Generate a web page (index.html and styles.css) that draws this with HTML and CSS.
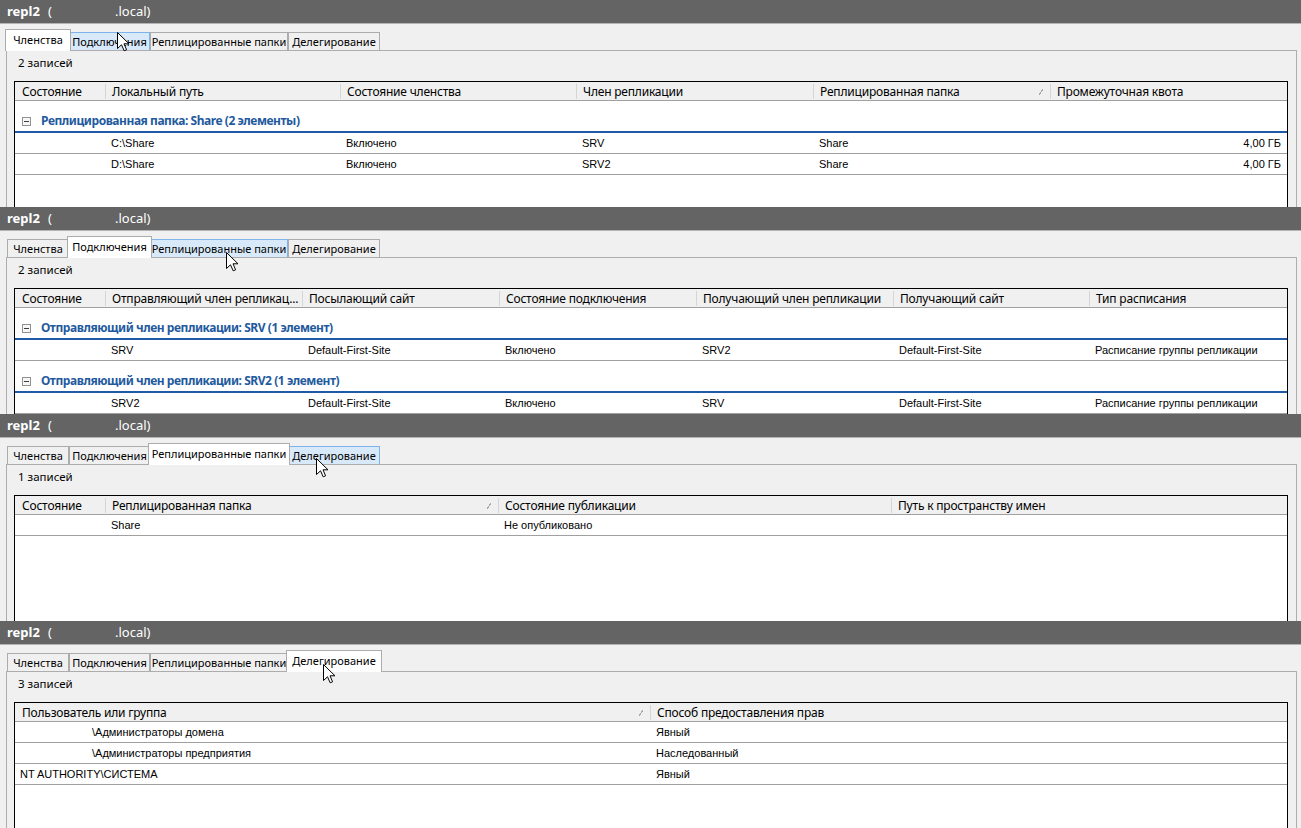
FILE: index.html
```html
<!DOCTYPE html>
<html lang="ru">
<head>
<meta charset="utf-8">
<title>repl2</title>
<link rel="stylesheet" href="styles.css">
</head>
<body>

<!-- Panel 1: Членства -->
<section class="panel">
  <div class="titlebar"><b class="tb-name">repl2</b><span class="tb-open">(</span><span>.local)</span></div>
  <div class="pbody">
    <div class="tabs">
      <div class="tab t1 sel">Членства</div>
      <div class="tab t2 hover">Подключения</div>
      <div class="tab t3">Реплицированные папки</div>
      <div class="tab t4">Делегирование</div>
    </div>
    <div class="tabpage">
      <div class="count">2 записей</div>
      <div class="list cols-a">
        <div class="lrow head">
          <div class="hc first">Состояние</div>
          <div class="hc">Локальный путь</div>
          <div class="hc">Состояние членства</div>
          <div class="hc">Член репликации</div>
          <div class="hc sorted">Реплицированная папка<span class="sort"></span></div>
          <div class="hc last">Промежуточная квота</div>
        </div>
        <div class="group"><span class="minus"></span>Реплицированная папка: Share (2 элементы)</div>
        <div class="lrow item">
          <div class="c"></div><div class="c">C:\Share</div><div class="c">Включено</div><div class="c">SRV</div><div class="c">Share</div><div class="c num">4,00 ГБ</div>
        </div>
        <div class="lrow item">
          <div class="c"></div><div class="c">D:\Share</div><div class="c">Включено</div><div class="c">SRV2</div><div class="c">Share</div><div class="c num">4,00 ГБ</div>
        </div>
      </div>
    </div>
  </div>
  <svg class="cursor cur1" width="13" height="20" viewBox="0 0 13 20"><path d="M0.5 0.5 L0.5 16.5 L4.5 12.8 L7.2 18.8 L9.6 17.8 L7 11.8 L12 11.8 Z" fill="#fff" stroke="#000" stroke-width="1"/></svg>
</section>

<!-- Panel 2: Подключения -->
<section class="panel">
  <div class="titlebar"><b class="tb-name">repl2</b><span class="tb-open">(</span><span>.local)</span></div>
  <div class="pbody">
    <div class="tabs">
      <div class="tab t1">Членства</div>
      <div class="tab t2 sel">Подключения</div>
      <div class="tab t3 hover">Реплицированные папки</div>
      <div class="tab t4">Делегирование</div>
    </div>
    <div class="tabpage">
      <div class="count">2 записей</div>
      <div class="list cols-b">
        <div class="lrow head">
          <div class="hc first">Состояние</div>
          <div class="hc">Отправляющий член репликац...</div>
          <div class="hc">Посылающий сайт</div>
          <div class="hc">Состояние подключения</div>
          <div class="hc">Получающий член репликации</div>
          <div class="hc">Получающий сайт</div>
          <div class="hc last">Тип расписания</div>
        </div>
        <div class="group"><span class="minus"></span>Отправляющий член репликации: SRV (1 элемент)</div>
        <div class="lrow item">
          <div class="c"></div><div class="c">SRV</div><div class="c">Default-First-Site</div><div class="c">Включено</div><div class="c">SRV2</div><div class="c">Default-First-Site</div><div class="c">Расписание группы репликации</div>
        </div>
        <div class="group"><span class="minus"></span>Отправляющий член репликации: SRV2 (1 элемент)</div>
        <div class="lrow item">
          <div class="c"></div><div class="c">SRV2</div><div class="c">Default-First-Site</div><div class="c">Включено</div><div class="c">SRV</div><div class="c">Default-First-Site</div><div class="c">Расписание группы репликации</div>
        </div>
      </div>
    </div>
  </div>
  <svg class="cursor cur2" width="13" height="20" viewBox="0 0 13 20"><path d="M0.5 0.5 L0.5 16.5 L4.5 12.8 L7.2 18.8 L9.6 17.8 L7 11.8 L12 11.8 Z" fill="#fff" stroke="#000" stroke-width="1"/></svg>
</section>

<!-- Panel 3: Реплицированные папки -->
<section class="panel">
  <div class="titlebar"><b class="tb-name">repl2</b><span class="tb-open">(</span><span>.local)</span></div>
  <div class="pbody">
    <div class="tabs">
      <div class="tab t1">Членства</div>
      <div class="tab t2">Подключения</div>
      <div class="tab t3 sel">Реплицированные папки</div>
      <div class="tab t4 hover">Делегирование</div>
    </div>
    <div class="tabpage">
      <div class="count">1 записей</div>
      <div class="list cols-c">
        <div class="lrow head">
          <div class="hc first">Состояние</div>
          <div class="hc sorted">Реплицированная папка<span class="sort"></span></div>
          <div class="hc">Состояние публикации</div>
          <div class="hc last">Путь к пространству имен</div>
        </div>
        <div class="lrow item">
          <div class="c"></div><div class="c">Share</div><div class="c">Не опубликовано</div><div class="c"></div>
        </div>
      </div>
    </div>
  </div>
  <svg class="cursor cur3" width="13" height="20" viewBox="0 0 13 20"><path d="M0.5 0.5 L0.5 16.5 L4.5 12.8 L7.2 18.8 L9.6 17.8 L7 11.8 L12 11.8 Z" fill="#fff" stroke="#000" stroke-width="1"/></svg>
</section>

<!-- Panel 4: Делегирование -->
<section class="panel">
  <div class="titlebar"><b class="tb-name">repl2</b><span class="tb-open">(</span><span>.local)</span></div>
  <div class="pbody">
    <div class="tabs">
      <div class="tab t1">Членства</div>
      <div class="tab t2">Подключения</div>
      <div class="tab t3">Реплицированные папки</div>
      <div class="tab t4 sel">Делегирование</div>
    </div>
    <div class="tabpage">
      <div class="count">3 записей</div>
      <div class="list cols-d">
        <div class="lrow head">
          <div class="hc first sorted">Пользователь или группа<span class="sort"></span></div>
          <div class="hc last">Способ предоставления прав</div>
        </div>
        <div class="lrow item">
          <div class="c first"><span class="domain"></span>\Администраторы домена</div><div class="c">Явный</div>
        </div>
        <div class="lrow item">
          <div class="c first"><span class="domain"></span>\Администраторы предприятия</div><div class="c">Наследованный</div>
        </div>
        <div class="lrow item">
          <div class="c first">NT AUTHORITY\СИСТЕМА</div><div class="c">Явный</div>
        </div>
      </div>
    </div>
  </div>
  <svg class="cursor cur4" width="13" height="20" viewBox="0 0 13 20"><path d="M0.5 0.5 L0.5 16.5 L4.5 12.8 L7.2 18.8 L9.6 17.8 L7 11.8 L12 11.8 Z" fill="#fff" stroke="#000" stroke-width="1"/></svg>
</section>

</body>
</html>
```

FILE: styles.css
```css
* { box-sizing: border-box; }

html, body {
  margin: 0;
  padding: 0;
  background: #f0f0f0;
}

body {
  width: 1301px;
  height: 828px;
  overflow: hidden;
  font-family: "Noto Sans", "Open Sans", sans-serif;
  font-size: 12px;
  color: #000;
}

.panel {
  position: relative;
  height: 207px;
  overflow: hidden;
  display: flex;
  flex-direction: column;
  background: #f0f0f0;
}

.titlebar {
  flex: none;
  height: 24px;
  background: #646464;
  border-bottom: 1px solid #b4b4b4;
  color: #fff;
  font-size: 13px;
  line-height: 23px;
  padding-left: 7px;
  white-space: nowrap;
  display: flex;
}

.tb-name { width: 41px; font-weight: bold; }
.tb-open { width: 67px; }

.pbody {
  flex: 1;
  display: flex;
  flex-direction: column;
  min-height: 0;
}

.tabs {
  flex: none;
  height: 21px;
  margin-top: 5px;
  padding-left: 7px;
  display: flex;
  align-items: flex-end;
}

.tab {
  width: var(--w);
  height: 18px;
  border: 1px solid #acacac;
  border-bottom: none;
  background: #f0f0f0;
  font-size: 11px;
  line-height: 17px;
  text-align: center;
  white-space: nowrap;
  overflow: hidden;
}

.t1 { --w: 62px; }
.t2 { --w: 81px; }
.t3 { --w: 138px; }
.t4 { --w: 92px; }

.tab.hover {
  background: #d8eaf9;
  border-color: #7eb4ea;
}

.tab.sel {
  position: relative;
  z-index: 2;
  width: calc(var(--w) + 4px);
  height: 22px;
  margin: 0 -2px -1px;
  background: #fff;
  line-height: 19px;
}

.tabpage {
  flex: 1;
  min-height: 0;
  margin: 0 4px 0 6px;
  border: 1px solid #adadad;
  border-bottom: none;
  padding: 4px 8px 0 7px;
  display: flex;
  flex-direction: column;
}

.count {
  flex: none;
  height: 16px;
  line-height: 16px;
  padding-left: 4px;
  margin-bottom: 10px;
  font-size: 11.5px;
}

.list {
  flex: 1;
  min-height: 0;
  background: #fff;
  border: 1px solid #000;
  border-bottom: none;
  overflow: hidden;
}

.lrow {
  display: grid;
}

.cols-a .lrow { grid-template-columns: 91px 235px 236px 237px 237px 1fr; }
.cols-b .lrow { grid-template-columns: 91px 197px 197px 197px 197px 196px 1fr; }
.cols-c .lrow { grid-template-columns: 91px 393px 393px 1fr; }
.cols-d .lrow { grid-template-columns: 636px 1fr; }

.head {
  height: 19px;
  background: #f0f0f0;
  border-bottom: 1px solid #a0a0a0;
}

.hc {
  position: relative;
  padding-left: 6px;
  padding-top: 1px;
  line-height: 17px;
  white-space: nowrap;
  overflow: hidden;
  letter-spacing: -0.2px;
  display: flex;
  justify-content: space-between;
  align-items: center;
}

.hc.first { padding-left: 7px; }

.hc::after {
  content: "";
  position: absolute;
  right: 0;
  top: 2px;
  bottom: 1px;
  width: 1px;
  background: #d5d5d5;
}

.hc.last::after { display: none; }

.sort {
  width: 4px;
  height: 6px;
  margin-right: 8px;
  background: linear-gradient(to bottom right, transparent 40%, #a8a8a8 40%, #a8a8a8 60%, transparent 60%);
}

.group {
  height: 32px;
  border-bottom: 2px solid #1f5aa6;
  padding: 10px 0 0 7px;
  line-height: 16px;
  color: #1f5a9e;
  font-weight: bold;
  white-space: nowrap;
  letter-spacing: -0.45px;
  display: flex;
  align-items: center;
}

.minus {
  width: 9px;
  height: 9px;
  margin-right: 10px;
  border: 1px solid #919191;
  background-color: #f6f6f6;
  background-image: linear-gradient(#3c3c3c, #3c3c3c);
  background-size: 5px 1px;
  background-position: center;
  background-repeat: no-repeat;
}

.item {
  height: 21px;
  border-bottom: 1px solid #a0a0a0;
}

.c {
  padding-left: 5px;
  padding-right: 6px;
  font-family: "Liberation Sans", Arial, sans-serif;
  font-size: 11px;
  line-height: 20px;
  white-space: nowrap;
  overflow: hidden;
}

.c.num { text-align: right; }

.domain {
  display: inline-block;
  width: 72px;
}

.cursor {
  position: absolute;
  z-index: 5;
}

.cur1 { left: 117px; top: 32px; }
.cur2 { left: 226px; top: 45px; }
.cur3 { left: 316px; top: 44px; }
.cur4 { left: 323px; top: 43px; }
```
